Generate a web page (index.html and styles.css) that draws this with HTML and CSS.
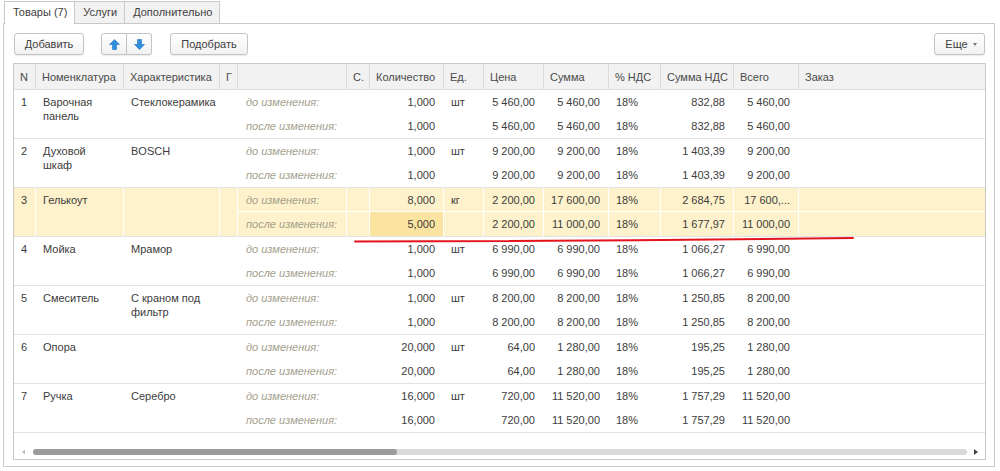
FILE: index.html
```html
<!DOCTYPE html>
<html lang="ru">
<head>
<meta charset="utf-8">
<title>Товары</title>
<link rel="stylesheet" href="styles.css">
</head>
<body>
<div class="page">
  <div class="tabs">
    <div class="tab active">Товары (7)</div>
    <div class="tab">Услуги</div>
    <div class="tab">Дополнительно</div>
  </div>
  <div class="frame">
    <div class="toolbar">
      <button class="btn btn-add">Добавить</button>
      <div class="btn-group">
        <button class="btn btn-icon" aria-label="Вверх"><svg width="11" height="11" viewBox="0 0 11 11"><path d="M5.5 0.5 L10.5 5.5 L7.5 5.5 L7.5 10.5 L3.5 10.5 L3.5 5.5 L0.5 5.5 Z" fill="#2f8fdc" stroke="#1f74bd" stroke-width="0.6"/></svg></button>
        <button class="btn btn-icon" aria-label="Вниз"><svg width="11" height="11" viewBox="0 0 11 11"><path d="M5.5 10.5 L10.5 5.5 L7.5 5.5 L7.5 0.5 L3.5 0.5 L3.5 5.5 L0.5 5.5 Z" fill="#2f8fdc" stroke="#1f74bd" stroke-width="0.6"/></svg></button>
      </div>
      <button class="btn btn-pick">Подобрать</button>
      <button class="btn btn-more">Еще <span class="caret"></span></button>
    </div>
    <div class="grid">
      <table class="gt">
        <colgroup>
          <col class="c-n"><col class="c-nom"><col class="c-har"><col class="c-g"><col class="c-lbl"><col class="c-s"><col class="c-qty"><col class="c-ed"><col class="c-price"><col class="c-sum"><col class="c-vat"><col class="c-vsum"><col class="c-total"><col class="c-order">
        </colgroup>
        <thead>
          <tr>
            <th>N</th><th>Номенклатура</th><th>Характеристика</th><th>Г</th><th></th><th>С.</th><th>Количество</th><th>Ед.</th><th>Цена</th><th>Сумма</th><th>% НДС</th><th>Сумма НДС</th><th>Всего</th><th>Заказ</th>
          </tr>
        </thead>
        <tbody>
          <tr class="s1">
            <td rowspan="2" class="top">1</td><td rowspan="2" class="top">Варочная<br>панель</td><td rowspan="2" class="top">Стеклокерамика</td><td rowspan="2" class="top"></td>
            <td class="lbl">до изменения:</td><td></td><td class="num">1,000</td><td>шт</td><td class="num">5 460,00</td><td class="num">5 460,00</td><td>18%</td><td class="num">832,88</td><td class="num">5 460,00</td><td></td>
          </tr>
          <tr class="s2">
            <td class="lbl">после изменения:</td><td></td><td class="num">1,000</td><td></td><td class="num">5 460,00</td><td class="num">5 460,00</td><td>18%</td><td class="num">832,88</td><td class="num">5 460,00</td><td></td>
          </tr>
          <tr class="s1">
            <td rowspan="2" class="top">2</td><td rowspan="2" class="top">Духовой<br>шкаф</td><td rowspan="2" class="top">BOSCH</td><td rowspan="2" class="top"></td>
            <td class="lbl">до изменения:</td><td></td><td class="num">1,000</td><td>шт</td><td class="num">9 200,00</td><td class="num">9 200,00</td><td>18%</td><td class="num">1 403,39</td><td class="num">9 200,00</td><td></td>
          </tr>
          <tr class="s2">
            <td class="lbl">после изменения:</td><td></td><td class="num">1,000</td><td></td><td class="num">9 200,00</td><td class="num">9 200,00</td><td>18%</td><td class="num">1 403,39</td><td class="num">9 200,00</td><td></td>
          </tr>
          <tr class="s1 hl">
            <td rowspan="2" class="top">3</td><td rowspan="2" class="top">Гелькоут</td><td rowspan="2" class="top"></td><td rowspan="2" class="top"></td>
            <td class="lbl">до изменения:</td><td></td><td class="num">8,000</td><td>кг</td><td class="num">2 200,00</td><td class="num">17 600,00</td><td>18%</td><td class="num">2 684,75</td><td class="num">17 600,...</td><td></td>
          </tr>
          <tr class="s2 hl">
            <td class="lbl">после изменения:</td><td></td><td class="num edit">5,000</td><td></td><td class="num">2 200,00</td><td class="num">11 000,00</td><td>18%</td><td class="num">1 677,97</td><td class="num">11 000,00</td><td></td>
          </tr>
          <tr class="s1">
            <td rowspan="2" class="top">4</td><td rowspan="2" class="top">Мойка</td><td rowspan="2" class="top">Мрамор</td><td rowspan="2" class="top"></td>
            <td class="lbl">до изменения:</td><td></td><td class="num">1,000</td><td>шт</td><td class="num">6 990,00</td><td class="num">6 990,00</td><td>18%</td><td class="num">1 066,27</td><td class="num">6 990,00</td><td></td>
          </tr>
          <tr class="s2">
            <td class="lbl">после изменения:</td><td></td><td class="num">1,000</td><td></td><td class="num">6 990,00</td><td class="num">6 990,00</td><td>18%</td><td class="num">1 066,27</td><td class="num">6 990,00</td><td></td>
          </tr>
          <tr class="s1">
            <td rowspan="2" class="top">5</td><td rowspan="2" class="top">Смеситель</td><td rowspan="2" class="top">С краном под<br>фильтр</td><td rowspan="2" class="top"></td>
            <td class="lbl">до изменения:</td><td></td><td class="num">1,000</td><td>шт</td><td class="num">8 200,00</td><td class="num">8 200,00</td><td>18%</td><td class="num">1 250,85</td><td class="num">8 200,00</td><td></td>
          </tr>
          <tr class="s2">
            <td class="lbl">после изменения:</td><td></td><td class="num">1,000</td><td></td><td class="num">8 200,00</td><td class="num">8 200,00</td><td>18%</td><td class="num">1 250,85</td><td class="num">8 200,00</td><td></td>
          </tr>
          <tr class="s1">
            <td rowspan="2" class="top">6</td><td rowspan="2" class="top">Опора</td><td rowspan="2" class="top"></td><td rowspan="2" class="top"></td>
            <td class="lbl">до изменения:</td><td></td><td class="num">20,000</td><td>шт</td><td class="num">64,00</td><td class="num">1 280,00</td><td>18%</td><td class="num">195,25</td><td class="num">1 280,00</td><td></td>
          </tr>
          <tr class="s2">
            <td class="lbl">после изменения:</td><td></td><td class="num">20,000</td><td></td><td class="num">64,00</td><td class="num">1 280,00</td><td>18%</td><td class="num">195,25</td><td class="num">1 280,00</td><td></td>
          </tr>
          <tr class="s1">
            <td rowspan="2" class="top">7</td><td rowspan="2" class="top">Ручка</td><td rowspan="2" class="top">Серебро</td><td rowspan="2" class="top"></td>
            <td class="lbl">до изменения:</td><td></td><td class="num">16,000</td><td>шт</td><td class="num">720,00</td><td class="num">11 520,00</td><td>18%</td><td class="num">1 757,29</td><td class="num">11 520,00</td><td></td>
          </tr>
          <tr class="s2">
            <td class="lbl">после изменения:</td><td></td><td class="num">16,000</td><td></td><td class="num">720,00</td><td class="num">11 520,00</td><td>18%</td><td class="num">1 757,29</td><td class="num">11 520,00</td><td></td>
          </tr>
        </tbody>
      </table>
      <div class="hscroll">
        <div class="sarrow"><span class="tri-left"></span></div>
        <div class="track"><div class="thumb"></div></div>
        <div class="sarrow"><span class="tri-right"></span></div>
      </div>
    </div>
  </div>
  <svg class="annot" width="1000" height="471" viewBox="0 0 1000 471"><path d="M355 241.5 Q600 241 853 238" fill="none" stroke="#e3141c" stroke-width="2" stroke-linecap="round"/></svg>
</div>
</body>
</html>
```

FILE: styles.css
```css
html, body {
  margin: 0;
  padding: 0;
  background: #fff;
}
body {
  font-family: "Liberation Sans", Arial, sans-serif;
  font-size: 11px;
  color: #404040;
}
.page {
  position: relative;
  width: 1000px;
  height: 471px;
  padding-top: 1px;
  box-sizing: border-box;
  overflow: hidden;
}
.tabs {
  display: flex;
  align-items: flex-start;
  height: 22px;
  padding-left: 4px;
  position: relative;
  z-index: 1;
}
.tab {
  height: 21px;
  line-height: 21px;
  padding: 0 7px 0 8px;
  border: 1px solid #c9c9c9;
  border-bottom: 0;
  background: #f2f2f2;
  color: #404040;
  margin-left: -1px;
  white-space: nowrap;
}
.tab:first-child {
  margin-left: 0;
}
.tab.active {
  background: #fff;
  height: 22px;
  padding-left: 8px;
}
.frame {
  margin-left: 3px;
  width: 992px;
  height: 444px;
  box-sizing: border-box;
  border: 1px solid #c9c9c9;
  padding: 9px 8px 6px 9px;
}
.toolbar {
  display: flex;
  align-items: center;
  height: 22px;
  margin-bottom: 8px;
}
.btn {
  font-family: "Liberation Sans", Arial, sans-serif;
  font-size: 11px;
  color: #404040;
  height: 22px;
  box-sizing: border-box;
  border: 1px solid #c4c4c4;
  border-radius: 3px;
  background: linear-gradient(#ffffff, #f1f1f1);
  box-shadow: 0 1px 1px rgba(0, 0, 0, 0.08);
  padding: 0 10px;
  margin: 0;
  display: flex;
  align-items: center;
  justify-content: center;
}
.btn-add {
  width: 70px;
  margin-left: 1px;
}
.btn-group {
  display: flex;
  margin-left: 17px;
}
.btn-icon {
  width: 26px;
  padding: 0;
}
.btn-icon:first-child {
  border-top-right-radius: 0;
  border-bottom-right-radius: 0;
}
.btn-icon:last-child {
  border-top-left-radius: 0;
  border-bottom-left-radius: 0;
  border-left: 0;
  width: 25px;
}
.btn-pick {
  width: 78px;
  margin-left: 18px;
}
.btn-more {
  margin-left: auto;
  margin-right: 1px;
  width: 51px;
  padding: 0 0 0 3px;
  gap: 5px;
}
.caret {
  width: 0;
  height: 0;
  border-left: 2.5px solid transparent;
  border-right: 2.5px solid transparent;
  border-top: 3px solid #777;
  margin-top: 1px;
}
.grid {
  height: 397px;
  box-sizing: border-box;
  border: 1px solid #c9c9c9;
  display: flex;
  flex-direction: column;
}
.gt {
  width: 971px;
  table-layout: fixed;
  border-collapse: separate;
  border-spacing: 0;
}
.c-n { width: 22px; }
.c-nom { width: 88px; }
.c-har { width: 96px; }
.c-g { width: 18px; }
.c-lbl { width: 109px; }
.c-s { width: 23px; }
.c-qty { width: 74px; }
.c-ed { width: 40px; }
.c-price { width: 60px; }
.c-sum { width: 65px; }
.c-vat { width: 52px; }
.c-vsum { width: 73px; }
.c-total { width: 65px; }
.c-order { width: 186px; }
.gt th {
  height: 25px;
  background: #f2f2f2;
  font-weight: normal;
  text-align: left;
  color: #4a4a4a;
  padding: 0 0 0 6px;
  border-right: 1px solid #dcdcdc;
  border-bottom: 1px solid #dcdcdc;
  white-space: nowrap;
  overflow: hidden;
}
.gt th:last-child {
  border-right: 0;
}
.gt td {
  padding: 0 0 0 7px;
  border-right: 1px solid #fff;
  white-space: nowrap;
  overflow: hidden;
  color: #3c3c3c;
}
.gt td:last-child {
  border-right: 0;
}
.gt tr.s1 {
  height: 24px;
}
.gt tr.s2 {
  height: 25px;
}
.gt tr.s1 td {
  border-bottom: 1px solid #fff;
}
.gt tr.s1 td.top,
.gt tr.s2 td {
  border-bottom: 1px solid #e2e2e2;
}
.gt td.top {
  vertical-align: top;
  padding-top: 5px;
  line-height: 14px;
  white-space: normal;
}
.gt td.num {
  text-align: right;
  padding: 0 8px 0 0;
}
.gt td.lbl {
  font-style: italic;
  color: #a39e8b;
  padding-left: 8px;
}
.gt tr.hl td {
  background: #fdf2cb;
}
.gt tr.hl td.edit {
  background: #fbe3a0;
}
.hscroll {
  margin-top: auto;
  height: 26px;
  box-sizing: border-box;
  display: flex;
  align-items: flex-end;
  padding-bottom: 4px;
}
.sarrow {
  width: 19px;
  height: 6px;
  display: flex;
  align-items: center;
  justify-content: center;
}
.sarrow:last-child {
  width: 18px;
}
.tri-left {
  width: 0;
  height: 0;
  border-top: 2.5px solid transparent;
  border-bottom: 2.5px solid transparent;
  border-right: 3px solid #b5b5b5;
}
.tri-right {
  width: 0;
  height: 0;
  border-top: 3px solid transparent;
  border-bottom: 3px solid transparent;
  border-left: 4px solid #444;
}
.track {
  flex: 1;
  height: 6px;
  border-radius: 3px;
  background: #d9d9d9;
}
.thumb {
  width: 364px;
  height: 6px;
  border-radius: 3px;
  background: #9b9b9b;
}
.annot {
  position: absolute;
  left: 0;
  top: 0;
  pointer-events: none;
}
```
